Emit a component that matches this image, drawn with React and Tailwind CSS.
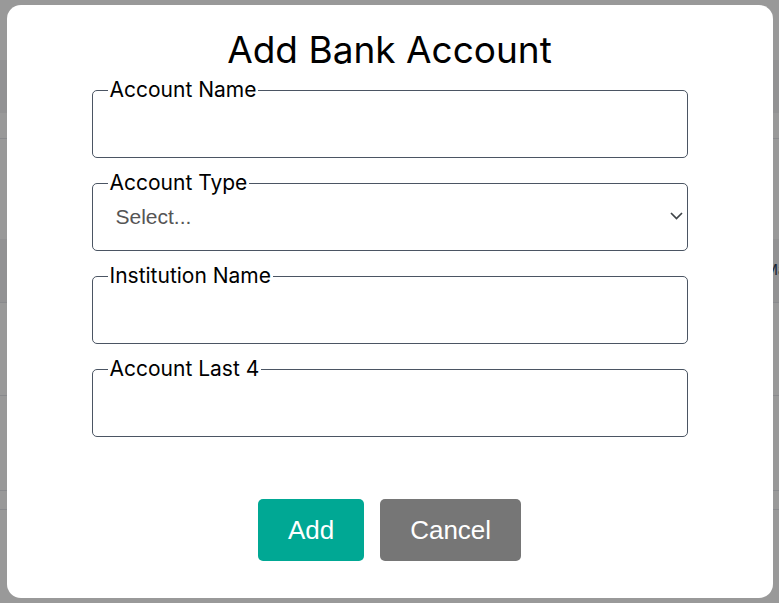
import React from "react";

const fields = [
  { label: "Account Name", type: "text" },
  { label: "Account Type", type: "select" },
  { label: "Institution Name", type: "text" },
  { label: "Account Last 4", type: "text" },
];

// page rows sitting behind the modal overlay
const BackgroundPage = () => (
  <div className="w-full h-screen bg-white font-['Inter',sans-serif] text-[15px] text-gray-800">
    <div className="h-[60px]" />
    <div className="h-[53px] bg-gray-100 flex items-center pr-[2px] -ml-[40px]">
      <span className="font-semibold">Field</span>
    </div>
    <div className="h-[26px] border-b border-gray-200" />
    <div className="h-[100px]" />
    <div className="h-[64px] bg-gray-100 border-b border-gray-200 flex items-center justify-end -mr-[20px]">
      <span className="text-slate-700">Checking Main</span>
    </div>
    <div className="h-[93px] border-b border-gray-200" />
    <div className="h-[95px] border-b border-gray-200" />
    <div className="h-[19px] border-b border-gray-200" />
  </div>
);

const Field = ({ label, type }) => (
  <fieldset className="w-[596px] border border-[#4b5563] rounded-[5px] px-0 pb-[13px]">
    <legend className="ml-[15px] px-0.5 text-[21px] leading-7 text-black font-['Inter',sans-serif]">
      {label}
    </legend>
    {type === "select" ? (
      <div className="relative">
        <select className="appearance-none w-full h-10 bg-transparent pl-[23px] pr-8 text-[21px] text-[#555] font-['Liberation_Sans',Arial,sans-serif] outline-none">
          <option>Select...</option>
          <option>Checking</option>
          <option>Savings</option>
          <option>Credit Card</option>
        </select>
        <svg
          className="absolute right-[4px] top-[15px] pointer-events-none"
          width="13"
          height="8"
          viewBox="0 0 13 8"
          fill="none"
        >
          <path d="M1 1l5.5 5.5L12 1" stroke="#3f4448" strokeWidth="1.7" />
        </svg>
      </div>
    ) : (
      <input type="text" className="w-full h-10 bg-transparent px-[23px] text-[20px] outline-none" />
    )}
  </fieldset>
);

export default function App() {
  return (
    <div className="relative">
      <BackgroundPage />
      <div className="fixed inset-0 bg-black/40 flex items-center justify-center">
        <div className="w-[766px] h-[593px] bg-white rounded-[14px] flex flex-col items-center pt-[25px]">
          <h2 className="text-[37px] leading-10 font-normal text-black font-['Inter',sans-serif]">
            Add Bank Account
          </h2>
          <div className="mt-[6px] flex flex-col gap-[11px]">
            {fields.map((f) => (
              <Field key={f.label} {...f} />
            ))}
          </div>
          <div className="mt-[62px] flex gap-4">
            <button className="h-[62px] px-[30px] rounded-[5px] bg-[#00a894] text-white text-[26px] font-['Liberation_Sans',Arial,sans-serif]">
              Add
            </button>
            <button className="h-[62px] px-[30px] rounded-[5px] bg-[#767676] text-white text-[26px] font-['Liberation_Sans',Arial,sans-serif]">
              Cancel
            </button>
          </div>
        </div>
      </div>
    </div>
  );
}
